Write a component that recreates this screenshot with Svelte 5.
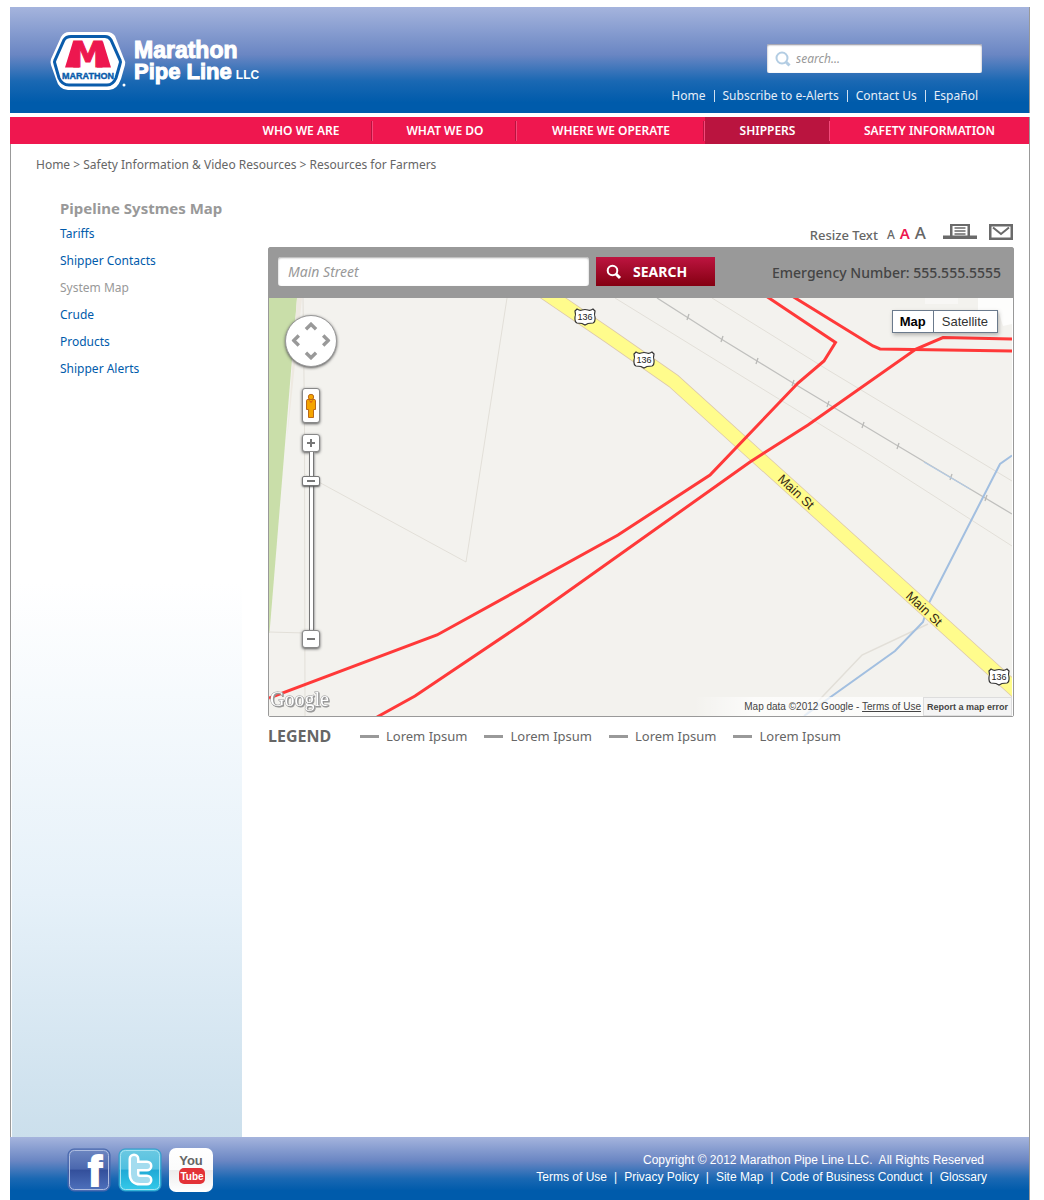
<script>
  const topLinks = ['Home', 'Subscribe to e-Alerts', 'Contact Us', 'Español'];
  const nav = ['WHO WE ARE', 'WHAT WE DO', 'WHERE WE OPERATE', 'SHIPPERS', 'SAFETY INFORMATION'];
  const side = ['Tariffs', 'Shipper Contacts', 'System Map', 'Crude', 'Products', 'Shipper Alerts'];
  const legend = ['Lorem Ipsum', 'Lorem Ipsum', 'Lorem Ipsum', 'Lorem Ipsum'];
  const footLinks = ['Terms of Use', 'Privacy Policy', 'Site Map', 'Code of Business Conduct', 'Glossary'];
  const ties = [[688, 317], [722, 339], [757, 361], [793, 383], [828, 404], [863, 425], [898, 446], [951, 477], [986, 498]];
  const shields = [[585, 317], [644, 360], [999, 677]];
  let siteQuery = $state('');
  let street = $state('');
  let zoom = $state(86);
  let textSize = $state(1);
  let view = $state('Map');
</script>

<div class="page">
  <header>
    <a class="brand" href="#home" aria-label="Marathon Pipe Line LLC">
      <svg width="78" height="60" viewBox="0 0 78 60">
        <path d="M19 1 H57 Q62 1 65 5 L74 28 Q76 31 75 34 L71 48 Q67 59 59 59 H18 Q9 59 6 48 L1 34 Q0 31 1 28 L11 6 Q14 1 19 1Z" fill="#fff" />
        <path d="M21 5.500 H55 Q59 5.500 61 9 L70 29 Q71 31 70 33 L66 47 Q63 54 57 54 H19 Q12 54 9 47 L5 33 Q4 31 5 29 L14 9 Q16 5.500 21 5.500Z" fill="#fff" stroke="#0a5cab" stroke-width="3" />
        <path d="M23 10.500H29V36.500H15ZM53 10.500H47V36.500H61Z" fill="#ed174f" />
        <text class="mark" x="38" y="36" text-anchor="middle">M</text>
        <text class="mark-name" x="38" y="48" text-anchor="middle">MARATHON</text>
        <circle cx="74" cy="54" r="1.500" fill="#fff" />
      </svg>
      <span class="brand-name"><span>Marathon</span><span>Pipe Line<small>LLC</small></span></span>
    </a>
    <div class="tools">
      <form class="site-search" onsubmit={(e) => e.preventDefault()}>
        <svg width="16" height="16" viewBox="0 0 16 16" fill="none" stroke="#b3cde3" stroke-width="2"><circle cx="7" cy="7" r="5.500" /><path d="M11 11 L14.500 14.500" stroke-width="3" /></svg>
        <input type="text" aria-label="Search the site" placeholder="search..." bind:value={siteQuery} />
      </form>
      <div class="top-links">
        {#each topLinks as l, i}
          {#if i}<i></i>{/if}<a href="#{l}">{l}</a>
        {/each}
      </div>
    </div>
  </header>

  <nav>
    <span></span>
    {#each nav as n}
      <a href="#{n}" class:active={n === 'SHIPPERS'}>{n}</a>
    {/each}
  </nav>

  <div class="body">
    <div class="crumbs"><a href="#home">Home</a> &gt; <a href="#safety">Safety Information &amp; Video Resources</a> &gt; <a href="#farmers">Resources for Farmers</a></div>
    <div class="columns">
      <aside>
        <h2>Pipeline Systmes Map</h2>
        {#each side as s}
          <a href="#{s}" class:current={s === 'System Map'}>{s}</a>
        {/each}
      </aside>
      <main>
        <div class="page-tools">
          <span>Resize Text</span>
          <div class="sizes">
            {#each ['Small', 'Medium', 'Large'] as s, i}
              <button class="size{i}" class:on={textSize === i} aria-label="{s} text" onclick={() => (textSize = i)}>A</button>
            {/each}
          </div>
          <button class="print" aria-label="Print">
            <svg width="34" height="17" viewBox="0 0 34 17"><path d="M0 12.500 H34 V16 H0Z M7 1 H27 V13 H7Z" fill="#6a6a6a" /><path d="M9.500 3 H24.500 V12.500 H9.500Z" fill="#fff" /><path d="M11.500 5H22.500M11.500 8H22.500M11.500 11H22.500" stroke="#6a6a6a" stroke-width="1.500" /></svg>
          </button>
          <button aria-label="Email">
            <svg width="24" height="16" viewBox="0 0 24 16" fill="none" stroke="#6a6a6a"><rect x="1.250" y="1.250" width="21.500" height="13.500" stroke-width="2.500" /><path d="M4 3.500 L12 10 L20 3.500" stroke-width="2" /></svg>
          </button>
        </div>

        <section class="map-box">
          <form class="map-bar" onsubmit={(e) => e.preventDefault()}>
            <input type="text" aria-label="Street" placeholder="Main Street" bind:value={street} />
            <button>
              <svg width="16" height="16" viewBox="0 0 16 16" fill="none" stroke="#fff" stroke-width="2"><circle cx="6.500" cy="6.500" r="4.800" /><path d="M10 10 L14 14" stroke-width="3" /></svg>
              SEARCH
            </button>
            <strong>Emergency Number: 555.555.5555</strong>
          </form>
          <div class="map">
            <svg class="canvas" viewBox="269 298 744 418">
              <rect x="269" y="298" width="743" height="418" fill="#f3f2ee" />
              <path d="M978 298H1012V324L1003 326L998 310H978Z" fill="#fff" opacity=".8" />
              <path d="M925 298H958V304H925Z" fill="#fff" opacity=".4" />
              <path d="M269 298H297L269.500 633H269Z" fill="#c9dea9" />
              <path d="M297 298H302L287 440Z" fill="#eee9e1" />
              <g fill="none" stroke="#e2dfd8">
                <path d="M303 298L304.500 420L305 716M269 632L305 633M304 474L466 562L507 298" />
                <path d="M615 298L748 380L870 455L1012 546M712 298L828 370L1012 481" />
                <path d="M804 716L862 655L928 624" stroke-width="1.500" />
              </g>
              <path d="M657 298L722 339.500L793 383L898 446L1012 514" fill="none" stroke="#c0c0be" stroke-width="1.300" />
              {#each ties as [x, y]}<path d="M{x - 1} {y + 3}L{x + 1} {y - 3}" stroke="#b9b9b7" stroke-width="1.300" />{/each}
              <path d="M924 462L970 489" stroke="#b4cae2" stroke-width="1.300" />
              <path d="M1012 455.500L1000 464L929 603L923 622L895 651L804 716" fill="none" stroke="#a2bfe0" stroke-width="2" />
              <path d="M540 289L609 336L673.500 381L1022 696" fill="none" stroke="#ddc9ac" stroke-width="15" />
              <path d="M540 289L609 336L673.500 381L1022 696" fill="none" stroke="#fffc8c" stroke-width="13.500" />
              <rect x="1012" y="298" width="2" height="418" fill="#fff" />
              <g fill="none" stroke="#ff3939" stroke-width="3">
                <path d="M766 296L835.500 342.500L824 361L798 383L710 475L618 535L437 635L269 698" />
                <path d="M792 296L873 346L880 349L1012 351" />
                <path d="M1012 339L943 337.500L916 349L808 425L750 462L525 622L415 696L377 717" />
              </g>
              <g class="road-name" text-anchor="middle">
                <text transform="translate(793 495) rotate(43)">Main St</text>
                <text transform="translate(921 612) rotate(43)">Main St</text>
              </g>
              {#each shields as [x, y]}
                <g transform="translate({x} {y})">
                  <path d="M-8 -8Q-5 -6 -3 -7Q0 -8 3 -7Q5 -6 8 -8L10 -6Q9 -2 10 0Q10.500 5 8 6L3 6.500L0 8L-3 6.500L-8 6Q-10.500 5 -10 0Q-9 -2 -10 -6Z" fill="#fff" stroke="#333" stroke-width="1.200" />
                  <text class="route" y="3" text-anchor="middle">136</text>
                </g>
              {/each}
              <text class="google" x="270" y="706">Google</text>
            </svg>

            <div class="controls">
              <div class="pan">
                <button class="up" aria-label="Pan up"><svg viewBox="0 0 12 8"><path d="M1.500 6.500L6 2L10.500 6.500" /></svg></button>
                <button class="left" aria-label="Pan left"><svg viewBox="0 0 12 8"><path d="M1.500 6.500L6 2L10.500 6.500" /></svg></button>
                <button class="right" aria-label="Pan right"><svg viewBox="0 0 12 8"><path d="M1.500 6.500L6 2L10.500 6.500" /></svg></button>
                <button class="down" aria-label="Pan down"><svg viewBox="0 0 12 8"><path d="M1.500 6.500L6 2L10.500 6.500" /></svg></button>
              </div>
              <button class="ctl pegman" aria-label="Street view">
                <svg width="12" height="26" viewBox="0 0 12 26" fill="#f5a500" stroke="#b9691a"><path d="M1.500 7.500Q1.500 6.500 3 6.500H9Q10.500 6.500 10.500 7.500V16.500H8.500V24.500H3.500V16.500H1.500Z" /><circle cx="6" cy="4" r="2.700" /><path d="M4.500 7.500L6 9.500L7.500 7.500" stroke="#d9541e" /></svg>
              </button>
              <button class="ctl" aria-label="Zoom in" onclick={() => (zoom = Math.min(100, zoom + 5))}><svg width="10" height="10" viewBox="0 0 10 10"><path d="M1 5H9M5 1V9" stroke="#777" stroke-width="2" /></svg></button>
              <input class="zoom" type="range" min="0" max="100" aria-label="Zoom level" bind:value={zoom} />
              <button class="ctl" aria-label="Zoom out" onclick={() => (zoom = Math.max(0, zoom - 5))}><svg width="10" height="10" viewBox="0 0 10 10"><path d="M1 5H9" stroke="#777" stroke-width="2" /></svg></button>
            </div>

            <div class="views">
              {#each ['Map', 'Satellite'] as v}
                <button class:on={view === v} onclick={() => (view = v)}>{v}</button>
              {/each}
            </div>

            <div class="credit">
              <span>Map data ©2012 Google - <a href="#terms">Terms of Use</a></span>
              <button>Report a map error</button>
            </div>
          </div>
        </section>

        <div class="legend">
          <h3>LEGEND</h3>
          <ul>
            {#each legend as l}<li>{l}</li>{/each}
          </ul>
        </div>
      </main>
    </div>
  </div>

  <footer>
    <div class="social">
      <a href="#facebook" aria-label="Facebook">
        <svg width="44" height="44" viewBox="0 0 44 44">
          <defs><linearGradient id="fb" x2="0" y2="1"><stop offset="0" stop-color="#6f88c2" /><stop offset=".48" stop-color="#4a67ae" /><stop offset=".5" stop-color="#334f9b" /><stop offset="1" stop-color="#4f72bd" /></linearGradient></defs>
          <rect x="1" y="1" width="42" height="42" rx="6" fill="url(#fb)" stroke="#4465ab" />
          <rect x="2.500" y="2.500" width="39" height="39" rx="5" fill="none" stroke="#aebde0" />
          <text class="fb" x="28" y="38" text-anchor="middle">f</text>
        </svg>
      </a>
      <a href="#twitter" aria-label="Twitter">
        <svg width="44" height="44" viewBox="0 0 44 44">
          <defs><linearGradient id="tw" x2="0" y2="1"><stop offset="0" stop-color="#6cc9e2" /><stop offset=".48" stop-color="#4fbfe0" /><stop offset=".5" stop-color="#1fa9d6" /><stop offset="1" stop-color="#35cbea" /></linearGradient></defs>
          <rect x="1" y="1" width="42" height="42" rx="6" fill="url(#tw)" stroke="#2c9cc9" />
          <rect x="2.500" y="2.500" width="39" height="39" rx="5" fill="none" stroke="#a5e2f1" />
          <g fill="none" stroke-linecap="round" stroke-linejoin="round"><path d="M16 11V26Q16 32 22 32H29M16 18H29" stroke="#fff" stroke-width="11" /><path d="M16 11V26Q16 32 22 32H29M16 18H29" stroke="#a4dcef" stroke-width="6" /></g>
        </svg>
      </a>
      <a href="#youtube" aria-label="YouTube">
        <svg width="44" height="44" viewBox="0 0 44 44">
          <defs><linearGradient id="yt" x2="0" y2="1"><stop offset="0" stop-color="#fff" /><stop offset=".49" stop-color="#fbfbfb" /><stop offset=".5" stop-color="#ececec" /><stop offset="1" stop-color="#fff" /></linearGradient></defs>
          <rect x="0" y="0" width="44" height="44" rx="7" fill="url(#yt)" />
          <rect x="10" y="20" width="26" height="16" rx="5" fill="#e33237" />
          <text class="you" x="22" y="17" text-anchor="middle">You</text>
          <text class="tube" x="23" y="32" text-anchor="middle">Tube</text>
        </svg>
      </a>
    </div>
    <div class="legal">
      <p>Copyright © 2012 Marathon Pipe Line LLC.&nbsp; All Rights Reserved</p>
      <div>
        {#each footLinks as l, i}
          {#if i}<span>|</span>{/if}<a href="#{l}">{l}</a>
        {/each}
      </div>
    </div>
  </footer>
</div>

<style>
  :global(body) { background: #fff; }
  .page, .page * { box-sizing: border-box; }
  .page {
    min-height: 100vh;
    padding: 7px 14px 0 10px;
    display: flex;
    flex-direction: column;
    font: 12px/16px 'Noto Sans', sans-serif;
    color: #666;
  }
  a { color: inherit; text-decoration: none; }
  button { font: inherit; color: inherit; padding: 0; border: 0; background: none; cursor: pointer; }
  input { font: inherit; border: 0; outline: 0; min-width: 0; margin: 0; }
  h2, h3, p, ul { margin: 0; padding: 0; }
  svg { display: block; flex: none; }

  header {
    height: 106px;
    padding: 24px 47px 0 40px;
    display: flex;
    justify-content: space-between;
    background: linear-gradient(#a5b4dd, #6a86c3 45%, #1a68b3 70%, #005bab 90%);
    border-right: 1px solid #999;
  }
  .brand { display: flex; gap: 6px; height: 60px; color: #fff; }
  .mark { font: bold 35px 'DejaVu Sans', sans-serif; fill: #ed174f; stroke: #ed174f; stroke-width: 1px; }
  .mark-name { font: bold 9px 'Liberation Sans', sans-serif; fill: #0a5cab; stroke: #0a5cab; stroke-width: .4px; }
  .brand-name { padding-top: 9px; display: flex; flex-direction: column; font: bold 22px/21px 'Liberation Sans', sans-serif; -webkit-text-stroke: 1px #fff; }
  .brand-name span:first-child { font-size: 23px; }
  .brand-name small { margin-left: 4px; font-size: 12px; -webkit-text-stroke: 0; }
  .tools { padding-top: 13px; }
  .site-search {
    width: 215px;
    height: 29px;
    margin-left: auto;
    padding: 0 8px;
    display: flex;
    align-items: center;
    gap: 5px;
    background: #fff;
    border-radius: 2px;
    box-shadow: inset 0 1px 2px #8a8a9a;
  }
  .site-search input { flex: 1; padding: 0; background: none; font-style: italic; }
  input::placeholder { color: #999; opacity: 1; }
  .top-links {
    margin-top: 15px;
    padding-right: 4px;
    display: flex;
    justify-content: flex-end;
    align-items: center;
    gap: 8px;
    color: #e6eef8;
  }
  .top-links i { width: 1px; height: 12px; background: #cfe0f0; }

  nav {
    margin-top: 4px;
    height: 27px;
    display: grid;
    grid-template: 27px / 219fr 144fr 144fr 188fr 125fr 199fr;
    background: #ef174f;
    border-right: 1px solid #999;
    color: #fff;
    font-weight: 600;
    white-space: nowrap;
  }
  nav a { display: flex; justify-content: center; align-items: center; }
  nav a:not(:last-child) {
    background: linear-gradient(90deg, #b8143f 50%, #f5497a 50%) right center / 2px 20px no-repeat;
  }
  nav a.active { background-color: #ba143f; }

  .body {
    flex: 1;
    display: flex;
    flex-direction: column;
    border: solid #999;
    border-width: 0 1px;
    padding-left: 1px;
  }
  .crumbs { padding: 13px 24px 0; }
  .columns { flex: 1; display: flex; }
  aside {
    width: 230px;
    flex: none;
    padding: 26px 0 0 48px;
    display: flex;
    flex-direction: column;
    background: linear-gradient(#fff0 410px, #e6f1f9 720px, #cbdfec);
    color: #005bab;
  }
  aside h2 { margin-bottom: 3px; font-size: 15px; line-height: 18px; color: #999; white-space: nowrap; }
  aside a { line-height: 27px; }
  aside a.current { color: #999; }
  main { flex: 1; min-width: 0; padding: 48px 15px 0 26px; }

  .page-tools { height: 26px; padding-right: 1px; display: flex; justify-content: flex-end; align-items: center; font-size: 13px; font-weight: 500; }
  .page-tools > span { padding-top: 1px; }
  .page-tools svg { margin-bottom: 5px; }
  .sizes { display: flex; align-items: baseline; gap: 5px; margin: 0 17px 0 9px; }
  .size0 { font-size: 12px; }
  .size1 { font-size: 15px; }
  .size2 { font-size: 17px; }
  .sizes .on { color: #ed174f; font-weight: 600; }
  .print { margin-right: 12px; }

  .map-box { border: 1px solid #999; border-radius: 2px; }
  .map-bar { height: 50px; padding: 0 12px 0 9px; display: flex; align-items: center; background: #999; }
  .map-bar input {
    width: 311px;
    height: 29px;
    margin: 0 7px 3px 0;
    padding: 0 10px;
    background: #fff;
    border-radius: 3px;
    box-shadow: inset 0 1px 2px #aaa;
    font-style: italic;
    font-size: 14px;
  }
  .map-bar button {
    width: 119px;
    height: 29px;
    margin-bottom: 3px;
    padding-left: 10px;
    display: flex;
    align-items: center;
    gap: 11px;
    background: linear-gradient(#bd1440, #840011);
    color: #fff;
    font-size: 14px;
    font-weight: 700;
  }
  .map-bar strong { margin-left: auto; font-size: 14px; font-weight: 500; color: #444; white-space: nowrap; }

  .map { position: relative; font-family: 'Liberation Sans', sans-serif; }
  .canvas { width: 100%; height: auto; }
  .road-name { font: 13px 'Liberation Sans', sans-serif; fill: #3a2c14; }
  .route { font: 9px 'Liberation Sans', sans-serif; fill: #222; }
  .google { font: 20px 'Liberation Serif', serif; fill: #fff; stroke: #999; stroke-width: 1px; paint-order: stroke; filter: drop-shadow(1px 1px 0 #999); }

  .controls { position: absolute; left: 16px; top: 17px; width: 52px; display: flex; flex-direction: column; align-items: center; }
  .pan {
    width: 52px;
    height: 52px;
    margin-bottom: 21px;
    padding: 3px;
    display: grid;
    grid-template: 'a u b' 1fr 'l c r' 1fr 'e d f' 1fr / 1fr 1fr 1fr;
    place-items: center;
    border: 1px solid #999;
    border-radius: 50%;
    background: #fff;
    box-shadow: 0 1px 3px #555;
  }
  .pan svg { width: 14px; height: 9px; fill: none; stroke: #999; stroke-width: 3px; }
  .up { grid-area: u; }
  .left { grid-area: l; rotate: -90deg; }
  .right { grid-area: r; rotate: 90deg; }
  .down { grid-area: d; rotate: 180deg; }
  .ctl {
    width: 18px;
    height: 18px;
    display: grid;
    place-items: center;
    background: #fff;
    border: 1px solid #888;
    border-radius: 3px;
    box-shadow: 0 1px 3px #555;
  }
  .pegman { height: 35px; margin-bottom: 11px; }
  .zoom { appearance: none; writing-mode: vertical-lr; direction: rtl; width: 18px; height: 178px; background: none; }
  .zoom::-webkit-slider-runnable-track {
    width: 5px;
    height: 100%;
    background: linear-gradient(90deg, #777 1px, #fff 1px, #fff 4px, #777 4px);
    box-shadow: 1px 0 2px #aaa;
  }
  .zoom::-webkit-slider-thumb {
    appearance: none;
    width: 18px;
    height: 10px;
    margin-left: -7px;
    border: 1px solid #777;
    border-radius: 2px;
    background: linear-gradient(#777, #777) center / 8px 2px no-repeat, #fff;
    box-shadow: 0 1px 2px #555;
  }
  .views { position: absolute; right: 15px; top: 12px; display: flex; border: 1px solid #6b7a8c; background: #fff; box-shadow: 1px 2px 4px #0004; font-size: 13px; }
  .views button { height: 21px; padding: 0 9px 0 8px; color: #333; }
  .views button:first-child { padding: 0 7px; border-right: 1px solid #6b7a8c; }
  .views .on { font-weight: bold; color: #000; }
  .credit {
    position: absolute;
    right: 1px;
    bottom: 0;
    height: 19px;
    padding-left: 50px;
    display: flex;
    align-items: center;
    gap: 2px;
    background: linear-gradient(90deg, #fff0, #fffb 60px);
    font-size: 10px;
    color: #444;
  }
  .credit a { text-decoration: underline; }
  .credit button { height: 19px; padding: 0 3px; border: 1px solid #ddd; background: #f4f4f4; font-size: 9px; font-weight: bold; }

  .legend { margin-top: 9px; display: flex; align-items: center; }
  h3 { width: 92px; font-size: 16px; line-height: 20px; font-weight: 700; }
  ul { display: flex; gap: 17px; list-style: none; font-size: 13px; }
  li { display: flex; align-items: center; gap: 7px; }
  li::before { content: ''; width: 19px; height: 3px; background: #999; }

  footer {
    height: 63px;
    padding: 0 42px 0 57px;
    display: flex;
    justify-content: space-between;
    align-items: center;
    background: linear-gradient(#a5b4dd, #6a86c3 38%, #1a68b3 66%, #005bab 85%);
    border-right: 1px solid #999;
    color: #fff;
    font: 12px/17px 'Liberation Sans', sans-serif;
  }
  .social { display: flex; gap: 7px; padding-top: 2px; }
  .social svg { overflow: visible; }
  .fb { font: bold 42px 'Liberation Sans', sans-serif; fill: #fff; stroke: #fff; stroke-width: 2px; }
  .you { font: bold 13px 'Liberation Sans', sans-serif; fill: #666; }
  .tube { font: bold 10px 'Liberation Sans', sans-serif; fill: #fff; }
  .legal { text-align: right; }
  .legal p { padding-right: 3px; }
  .legal div { display: flex; justify-content: flex-end; gap: 7px; }
</style>
